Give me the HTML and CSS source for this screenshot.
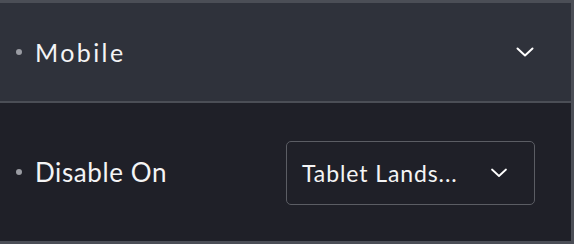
FILE: index.html
```html
<!DOCTYPE html>
<html lang="en">
<head>
  <meta charset="UTF-8">
  <title>Responsive Settings</title>
  <link rel="stylesheet" href="styles.css">
</head>
<body>

  <div class="panel">
    <div class="panel-header">
      <div class="label">
        <span class="dot"></span>
        <span class="title">Mobile</span>
      </div>
      <svg class="chevron" width="18" height="10" viewBox="0 0 18 10">
        <path d="M1.5 1.5 L9 8.5 L16.5 1.5" fill="none" stroke="#ffffff" stroke-width="2" stroke-linecap="round" stroke-linejoin="round"/>
      </svg>
    </div>

    <div class="panel-body">
      <div class="label">
        <span class="dot"></span>
        <span class="field-name">Disable On</span>
      </div>
      <div class="select-box">
        <span class="select-value">Tablet Lands...</span>
        <svg class="chevron small" width="18" height="10" viewBox="0 0 18 10">
          <path d="M2 1.5 L9 8 L16 1.5" fill="none" stroke="#ffffff" stroke-width="1.8" stroke-linecap="round" stroke-linejoin="round"/>
        </svg>
      </div>
    </div>
  </div>

</body>
</html>
```

FILE: styles.css
```css
body {
  margin: 0;
  background-color: #1f2028;
  font-family: Lato, "Open Sans", sans-serif;
  color: #f4f4f5;
}

.panel {
  width: 571px;
  border-top: 3px solid #4b4e56;
  border-right: 3px solid #4b4e56;
  border-bottom: 3px solid #4b4e56;
}

.panel-header {
  height: 98px;
  background-color: #2f323b;
  border-bottom: 2px solid #4b4e56;
  display: flex;
  align-items: center;
  justify-content: space-between;
  padding: 0 37px 0 16px;
}

.panel-body {
  height: 138px;
  background-color: #1f2028;
  display: flex;
  align-items: center;
  justify-content: space-between;
  padding: 0 36px 0 16px;
}

.label {
  display: flex;
  align-items: center;
}

.dot {
  width: 6px;
  height: 6px;
  border-radius: 50%;
  background-color: #9a9ca3;
  margin-right: 13px;
}

.title {
  font-size: 25px;
  letter-spacing: 2.4px;
}

.field-name {
  font-size: 26px;
  letter-spacing: 0.6px;
}

.select-box {
  width: 249px;
  height: 64px;
  border: 1.5px solid #5b5d64;
  border-radius: 5px;
  display: flex;
  align-items: center;
  justify-content: space-between;
  padding: 0 26px 0 15px;
  box-sizing: border-box;
  margin-top: 1px;
}

.select-value {
  font-size: 23px;
  letter-spacing: 0.9px;
}

.chevron {
  display: block;
}
```
